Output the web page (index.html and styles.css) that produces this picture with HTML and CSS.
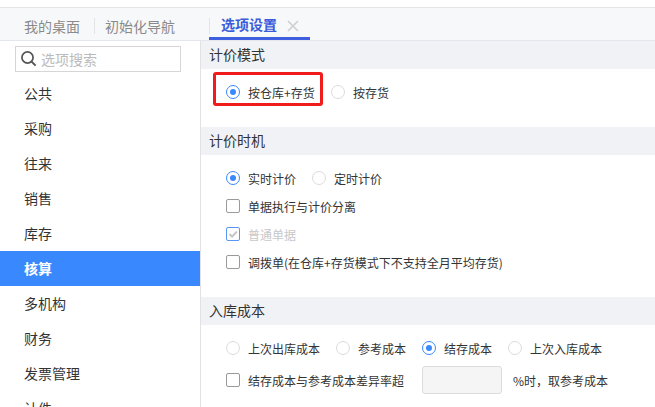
FILE: index.html
```html
<!DOCTYPE html>
<html lang="zh">
<head>
<meta charset="utf-8">
<title>选项设置</title>
<link rel="stylesheet" href="styles.css">
</head>
<body>
<div class="app">
  <div class="topstrip"></div>
  <nav class="tabs">
    <span class="tab first">我的桌面</span>
    <span class="tab second">初始化导航</span>
    <span class="tab active"><span class="tab-label">选项设置</span>
      <svg class="close" width="12" height="12" viewBox="0 0 12 12"><path d="M1 1l10 10M11 1L1 11" stroke="#cfcfcf" stroke-width="1.6" fill="none"/></svg>
    </span>
  </nav>
  <div class="body">
    <aside class="side">
      <div class="search">
        <svg width="17" height="17" viewBox="0 0 17 17"><circle cx="7.5" cy="7.5" r="5.6" stroke="#555" stroke-width="1.7" fill="none"/><path d="M11.6 11.6l4 4" stroke="#555" stroke-width="2" fill="none"/></svg>
        <span>选项搜索</span>
      </div>
      <ul class="menu">
        <li>公共</li><li>采购</li><li>往来</li><li>销售</li><li>库存</li>
        <li class="on">核算</li><li>多机构</li><li>财务</li><li>发票管理</li><li>计件</li>
      </ul>
    </aside>
    <main class="content">
      <h2 class="head">计价模式</h2>
      <section class="sec sec1">
        <div class="row">
          <span class="highlight"><span class="opt"><i class="radio checked"></i>按仓库+存货</span></span>
          <span class="opt plain"><i class="radio"></i>按存货</span>
        </div>
      </section>
      <h2 class="head">计价时机</h2>
      <section class="sec sec2">
        <div class="row"><span class="opt o1"><i class="radio checked"></i>实时计价</span><span class="opt"><i class="radio"></i>定时计价</span></div>
        <div class="row"><span class="opt"><i class="check"></i>单据执行与计价分离</span></div>
        <div class="row"><span class="opt dim"><i class="check ticked"><svg width="12" height="12" viewBox="0 0 12 12"><path d="M2.5 6l2.6 2.6L9.8 3.6" stroke="#c4c4c4" stroke-width="2" fill="none"/></svg></i>普通单据</span></div>
        <div class="row"><span class="opt"><i class="check"></i>调拨单(在仓库+存货模式下不支持全月平均存货)</span></div>
      </section>
      <h2 class="head">入库成本</h2>
      <section class="sec sec3">
        <div class="row">
          <span class="opt o2"><i class="radio"></i>上次出库成本</span>
          <span class="opt o3"><i class="radio"></i>参考成本</span>
          <span class="opt o4"><i class="radio checked"></i>结存成本</span>
          <span class="opt"><i class="radio"></i>上次入库成本</span>
        </div>
        <div class="row tall">
          <span class="opt"><i class="check"></i>结存成本与参考成本差异率超</span>
          <span class="field"></span>
          <span class="suffix">%时，取参考成本</span>
        </div>
      </section>
    </main>
  </div>
</div>
</body>
</html>
```
FILE: styles.css
```css
* { box-sizing: border-box; }
html, body { margin: 0; height: 100%; overflow: hidden; background: #fff; }
body { font-family: "Noto Sans CJK SC", "Liberation Sans", sans-serif; font-size: 12px; color: #333; }
.app { width: 655px; height: 407px; display: flex; flex-direction: column; overflow: hidden; }
.topstrip { height: 8px; flex: none; border-bottom: 1px solid #e4e4e6; }
.tabs { height: 33px; flex: none; display: flex; align-items: center; background: #f7f8fa; border-bottom: 1px solid #e4e6ee; padding-left: 24px; font-size: 14px; color: #8a8a8a; }
.tab { display: flex; align-items: center; height: 100%; }
.first { width: 70px; padding-top: 3px; }
.second { width: 115px; border-left: 1px solid #e3e3e6; height: 16px; padding-left: 10px; margin-top: 3px; }
.active { width: 101px; height: 32px; padding-left: 12px; border-bottom: 3px solid #3f5fe0; color: #3d5bd9; font-weight: 700; position: relative; }
.active::before { content: ""; position: absolute; left: 0; top: 10px; height: 16px; width: 1px; background: #e3e3e6; }
.tab-label { padding-top: 2px; }
.close { margin-left: 10px; margin-top: 7px; }
.body { flex: 1; display: flex; min-height: 0; }
.side { width: 201px; flex: none; border-right: 1px solid #e2e2e4; padding-top: 5px; }
.search { margin-left: 15px; width: 166px; height: 26px; border: 1px solid #d6d6d6; display: flex; align-items: center; padding: 0 0 1px 4px; gap: 4px; color: #bbb; font-size: 14px; }
.menu { list-style: none; margin: 4px 0 0; padding: 0; font-size: 14px; color: #333; }
.menu li { height: 35px; line-height: 35px; padding-left: 24px; }
.menu .on { background: #3a88fd; color: #fff; font-weight: 700; }
.content { flex: 1; min-width: 0; }
.head { margin: 0; height: 28px; line-height: 26px; background: #f1f2f6; font-size: 14px; font-weight: 400; padding-left: 8px; color: #333; }
.sec1 { height: 58px; padding-top: 3px; padding-left: 12px; }
.sec2 { height: 142px; padding-top: 9px; padding-left: 25px; }
.sec3 { padding-top: 9px; padding-left: 25px; }
.row { height: 28px; display: flex; align-items: center; }
.sec1 .row { height: 34px; }
.opt { display: inline-flex; align-items: center; white-space: nowrap; font-size: 12px; }
.highlight { width: 110px; height: 34px; border: 3px solid #f01c1c; border-radius: 3px; display: flex; align-items: center; padding: 6px 0 0 10px; }
.plain { margin-left: 8px; padding-top: 6px; }
.radio { width: 14px; height: 14px; border-radius: 50%; border: 1px solid #dcdcdc; margin-right: 8px; flex: none; background: #fff; display: inline-block; position: relative; }
.radio.checked { border-color: #3a88fd; }
.radio.checked::after { content: ""; position: absolute; left: 3px; top: 3px; width: 6px; height: 6px; border-radius: 50%; background: #3a88fd; }
.check { width: 14px; height: 14px; border: 1px solid #9a9a9a; border-radius: 2px; margin-right: 8px; flex: none; display: inline-flex; align-items: center; justify-content: center; }
.ticked { border-color: #5b96f5; }
.dim { color: #c8c8c8; }
.o1 { margin-right: 16px; }
.o2 { margin-right: 16px; }
.o3 { margin-right: 16px; }
.o4 { margin-right: 16px; }
.tall { height: 30px; margin-top: 3px; }
.field { width: 80px; height: 28px; margin-left: 18px; border: 1px solid #dcdcdc; border-radius: 3px; background: #f5f5f5; }
.suffix { margin-left: 11px; }
```
